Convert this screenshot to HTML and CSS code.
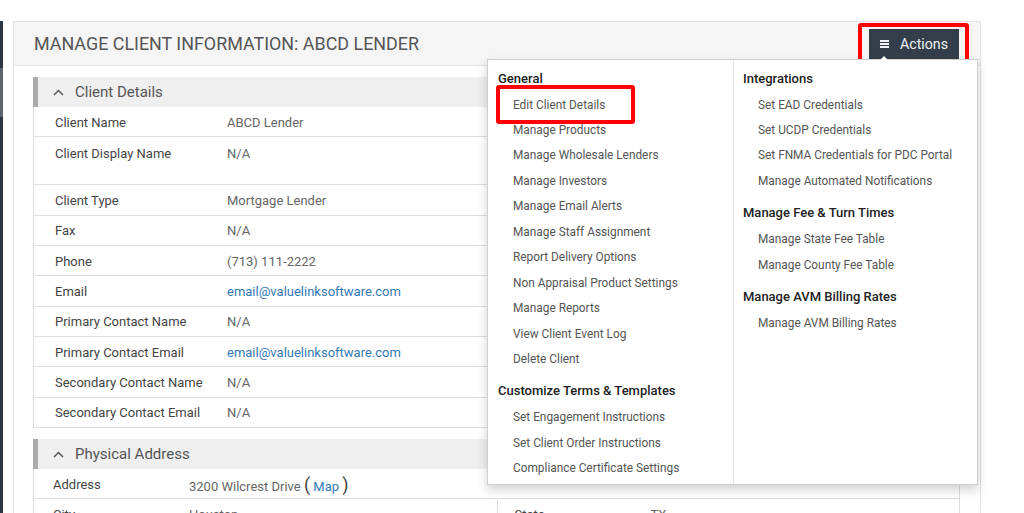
FILE: index.html
```html
<!DOCTYPE html>
<html lang="en">
<head>
    <meta charset="UTF-8">
    <title>Manage Client Information</title>
    <link rel="stylesheet" href="styles.css">
</head>
<body>
<div class="app">
    <aside class="rail"><span class="rail-mark"></span></aside>

    <main class="panel">
        <div class="panel-head">
            <h1>Manage Client Information: ABCD Lender</h1>
            <div class="actions">
                <button class="actions-btn">
                    <svg class="bars" width="9" height="8" viewBox="0 0 9 8"><rect y="0" width="9" height="2"/><rect y="3" width="9" height="2"/><rect y="6" width="9" height="2"/></svg>
                    Actions
                </button>
                <div class="menu">
                    <div class="menu-col">
                        <h4>General</h4>
                        <ul>
                            <li class="marked"><a href="#">Edit Client Details</a></li>
                            <li><a href="#">Manage Products</a></li>
                            <li><a href="#">Manage Wholesale Lenders</a></li>
                            <li><a href="#">Manage Investors</a></li>
                            <li><a href="#">Manage Email Alerts</a></li>
                            <li><a href="#">Manage Staff Assignment</a></li>
                            <li><a href="#">Report Delivery Options</a></li>
                            <li><a href="#">Non Appraisal Product Settings</a></li>
                            <li><a href="#">Manage Reports</a></li>
                            <li><a href="#">View Client Event Log</a></li>
                            <li><a href="#">Delete Client</a></li>
                        </ul>
                        <h4>Customize Terms &amp; Templates</h4>
                        <ul>
                            <li><a href="#">Set Engagement Instructions</a></li>
                            <li><a href="#">Set Client Order Instructions</a></li>
                            <li><a href="#">Compliance Certificate Settings</a></li>
                        </ul>
                    </div>
                    <div class="menu-col">
                        <h4>Integrations</h4>
                        <ul>
                            <li><a href="#">Set EAD Credentials</a></li>
                            <li><a href="#">Set UCDP Credentials</a></li>
                            <li><a href="#">Set FNMA Credentials for PDC Portal</a></li>
                            <li><a href="#">Manage Automated Notifications</a></li>
                        </ul>
                        <h4>Manage Fee &amp; Turn Times</h4>
                        <ul>
                            <li><a href="#">Manage State Fee Table</a></li>
                            <li><a href="#">Manage County Fee Table</a></li>
                        </ul>
                        <h4>Manage AVM Billing Rates</h4>
                        <ul>
                            <li><a href="#">Manage AVM Billing Rates</a></li>
                        </ul>
                    </div>
                </div>
            </div>
        </div>

        <div class="panel-body">
            <section class="group">
                <div class="group-head">
                    <svg class="chevron" width="11" height="7" viewBox="0 0 11 7"><path d="M1 6 L5.5 1.5 L10 6" fill="none" stroke="#555" stroke-width="1.5"/></svg>
                    Client Details
                </div>
                <div class="rows details">
                    <div class="row"><span class="label">Client Name</span><span class="value">ABCD Lender</span></div>
                    <div class="row tall"><span class="label">Client Display Name</span><span class="value">N/A</span></div>
                    <div class="row"><span class="label">Client Type</span><span class="value">Mortgage Lender</span></div>
                    <div class="row"><span class="label">Fax</span><span class="value">N/A</span></div>
                    <div class="row"><span class="label">Phone</span><span class="value">(713) 111-2222</span></div>
                    <div class="row"><span class="label">Email</span><span class="value"><a href="#">email@valuelinksoftware.com</a></span></div>
                    <div class="row"><span class="label">Primary Contact Name</span><span class="value">N/A</span></div>
                    <div class="row"><span class="label">Primary Contact Email</span><span class="value"><a href="#">email@valuelinksoftware.com</a></span></div>
                    <div class="row"><span class="label">Secondary Contact Name</span><span class="value">N/A</span></div>
                    <div class="row"><span class="label">Secondary Contact Email</span><span class="value">N/A</span></div>
                </div>
            </section>

            <section class="group">
                <div class="group-head">
                    <svg class="chevron" width="11" height="7" viewBox="0 0 11 7"><path d="M1 6 L5.5 1.5 L10 6" fill="none" stroke="#555" stroke-width="1.5"/></svg>
                    Physical Address
                </div>
                <div class="rows address">
                    <div class="row"><span class="label">Address</span><span class="value">3200 Wilcrest Drive <span class="paren">(</span> <a href="#">Map</a> <span class="paren">)</span></span></div>
                    <div class="row split">
                        <div class="cell"><span class="label">City</span><span class="value">Houston</span></div>
                        <div class="cell"><span class="label">State</span><span class="value">TX</span></div>
                    </div>
                </div>
            </section>
        </div>
    </main>
</div>
</body>
</html>
```

FILE: styles.css
```css
html, body {
    margin: 0;
    padding: 0;
    background: #fff;
    height: 513px;
    overflow: hidden;
}
body {
    font-family: Roboto, "Liberation Sans", sans-serif;
    color: #555;
}
.app {
    display: flex;
    align-items: flex-start;
}
.rail {
    width: 3px;
    height: 492px;
    margin-top: 21px;
    background: #2c3640;
    display: flex;
    flex-direction: column;
}
.rail-mark {
    display: block;
    height: 49px;
    margin-top: 47px;
    background: #5b636b;
}
.panel {
    margin: 21px 0 0 10px;
    width: 966px;
    border: 1px solid #e2e2e2;
    background: #fff;
}
.panel-head {
    display: flex;
    justify-content: space-between;
    align-items: center;
    height: 43px;
    padding: 0 21px 0 20px;
    background: #f5f5f5;
    border-bottom: 1px solid #e2e2e2;
}
.panel-head h1 {
    margin: 0;
    font-size: 17.9px;
    font-weight: 400;
    text-transform: uppercase;
    color: #555;
}
.actions {
    position: relative;
}
.actions::before {
    content: "";
    position: absolute;
    left: -11px;
    top: -6px;
    width: 103px;
    height: 35px;
    border: 4px solid #f00;
    border-radius: 3px;
}
.actions-btn {
    display: flex;
    align-items: center;
    gap: 11px;
    height: 30px;
    padding: 0 11px 0 11px;
    border: none;
    background: #333e4a;
    color: #eef2f5;
    font-family: Roboto, sans-serif;
    font-size: 14.2px;
}
.bars {
    fill: #eef2f5;
}
.menu {
    position: absolute;
    top: 30px;
    right: -19px;
    width: 489px;
    height: 424px;
    display: flex;
    background: #fff;
    border: 1px solid #cfcfcf;
    box-shadow: 0 5px 10px rgba(0, 0, 0, 0.18);
    z-index: 5;
}
.menu::before {
    content: "";
    position: absolute;
    top: -4px;
    right: 89px;
    border-left: 4px solid transparent;
    border-right: 4px solid transparent;
    border-bottom: 4px solid #fff;
}
.menu-col {
    width: 245px;
    padding: 8px 0 0 10px;
    box-sizing: border-box;
}
.menu-col + .menu-col {
    width: 244px;
    border-left: 1px solid #e4e4e4;
    padding-left: 9px;
}
.menu h4 {
    margin: 8px 0 3px;
    font-size: 13px;
    font-weight: 500;
    line-height: 22px;
    color: #222;
}
.menu h4:first-child {
    margin-top: 0;
}
.menu ul {
    list-style: none;
    margin: 0;
    padding: 0;
}
.menu li {
    line-height: 25.45px;
    font-size: 11.85px;
    position: relative;
}
.menu li a {
    display: block;
    padding-left: 15px;
    color: #555;
    text-decoration: none;
}
.menu li.marked::after {
    content: "";
    position: absolute;
    left: -2px;
    top: -8px;
    width: 131px;
    height: 31px;
    border: 4px solid #f00;
    border-radius: 3px;
}
.panel-body {
    padding: 11px 20px 0 19px;
}
.group {
    margin-bottom: 11px;
}
.group-head {
    display: flex;
    align-items: center;
    height: 30px;
    padding-left: 15px;
    gap: 11px;
    background: #efefef;
    border-left: 5px solid #aaa;
    font-size: 15px;
    color: #555;
}
.rows {
    border-left: 1px solid #ddd;
    border-right: 1px solid #ddd;
}
.row {
    display: grid;
    box-sizing: border-box;
    height: 30.35px;
    padding-top: 1px;
    align-items: center;
    border-bottom: 1px solid #ddd;
    font-size: 13px;
}
.details .row {
    grid-template-columns: 172px 1fr;
    padding-left: 21px;
}
.details .row.tall {
    height: 48px;
    align-items: start;
    padding-top: 9px;
}
.label {
    color: #444;
}
.value {
    color: #666;
}
.value a {
    color: #3379b5;
    text-decoration: none;
}
.address .row {
    grid-template-columns: 136px 1fr;
    padding-left: 19px;
}
.paren {
    font-size: 18px;
    color: #444;
}
.address .row.split {
    grid-template-columns: 1fr 1fr;
    padding-left: 0;
}
.cell {
    display: grid;
    grid-template-columns: 136px 1fr;
    padding-left: 19px;
    height: 100%;
    align-items: center;
}
.cell + .cell {
    border-left: 1px solid #ddd;
    padding-left: 17px;
}
```
